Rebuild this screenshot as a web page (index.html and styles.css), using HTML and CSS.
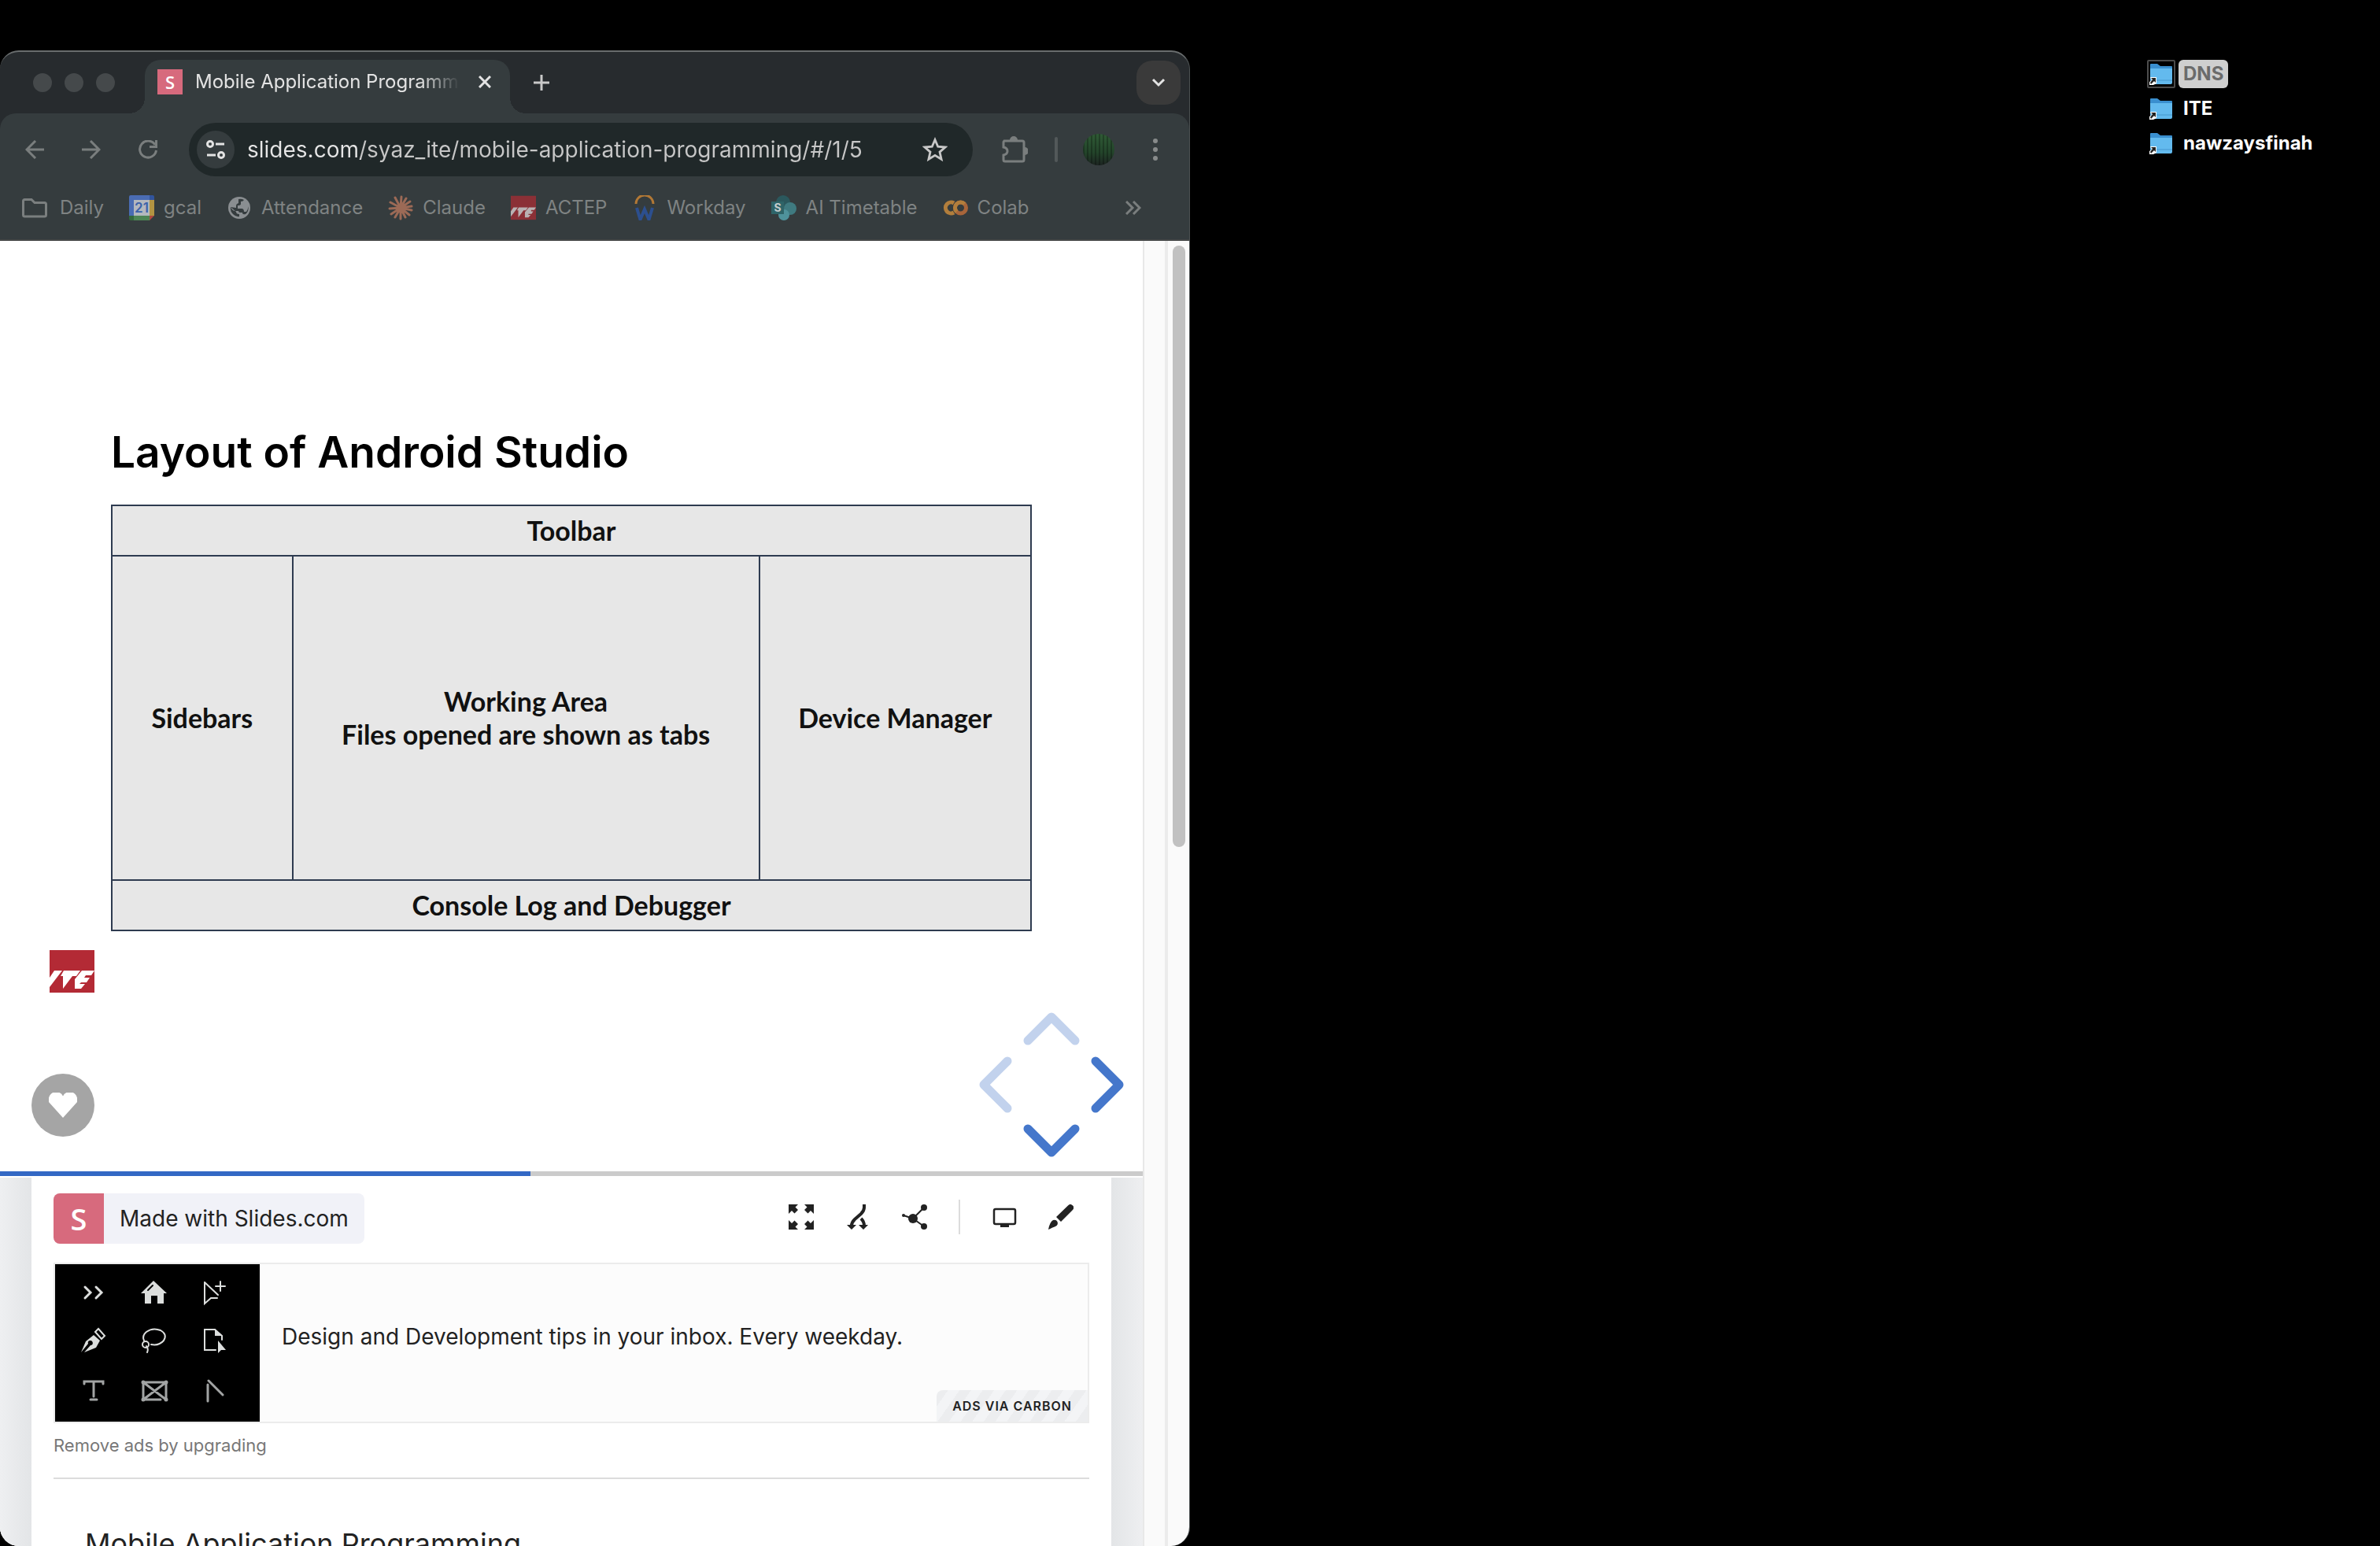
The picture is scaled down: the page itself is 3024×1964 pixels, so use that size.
FILE: index.html
```html
<!DOCTYPE html>
<html lang="en">
<head>
<meta charset="utf-8">
<title>Mobile Application Programming</title>
<link rel="stylesheet" href="styles.css">
</head>
<body>
<div class="desktop">
  <main class="window">
    <header class="tab-strip">
      <div class="lights"><span class="light"></span><span class="light"></span><span class="light"></span></div>
      <div class="tab">
        <span class="favicon">S</span>
        <span class="tab-title">Mobile Application Programming</span>
        <button class="tab-close" aria-label="Close tab">
          <svg width="16" height="16" viewBox="0 0 16 16"><path d="M1 1 15 15M15 1 1 15" stroke="#e3e3e3" stroke-width="3"/></svg>
        </button>
      </div>
      <button class="new-tab" aria-label="New tab">
        <svg width="20" height="20" viewBox="0 0 20 20"><path d="M10 0V20M0 10H20" stroke="#c9c9c9" stroke-width="3"/></svg>
      </button>
      <button class="tab-search" aria-label="Search tabs">
        <svg width="18" height="12" viewBox="0 0 18 12"><path d="M2 2 9 9 16 2" fill="none" stroke="#e3e3e3" stroke-width="3"/></svg>
      </button>
    </header>

    <nav class="toolbar" aria-label="Browser">
      <button class="tool" aria-label="Back">
        <svg width="24" height="24" viewBox="0 0 24 24" fill="none" stroke="#7a7e7e" stroke-width="3"><path d="M24 12H3M13 1 2 12 13 23"/></svg>
      </button>
      <button class="tool" aria-label="Forward">
        <svg width="24" height="24" viewBox="0 0 24 24" fill="none" stroke="#7a7e7e" stroke-width="3"><path d="M0 12H21M11 1 22 12 11 23"/></svg>
      </button>
      <button class="tool" aria-label="Reload">
        <svg width="24" height="24" viewBox="0 0 24 24" fill="none" stroke="#7a7e7e" stroke-width="3"><path d="M21 6A10.500 10.500 0 1 0 22.500 13M22.500 0V8.500H14"/></svg>
      </button>
      <div class="address">
        <button class="site-info" aria-label="Site information">
          <svg width="24" height="24" viewBox="0 0 24 24" fill="none" stroke="#e3e3e3" stroke-width="3"><circle cx="5" cy="5" r="3.500"/><path d="M12 5H23M1 19H12"/><circle cx="19" cy="19" r="3.500"/></svg>
        </button>
        <input class="url" type="text" aria-label="Address" value="slides.com/syaz_ite/mobile-application-programming/#/1/5">
        <button class="star" aria-label="Bookmark this page">
          <svg width="32" height="32" viewBox="0 0 32 32"><path d="M16 3.500 19.700 12.200 29 13 22 19.100 24.100 28.300 16 23.400 7.900 28.300 10 19.100 3 13 12.300 12.200Z" fill="none" stroke="#c7c7c7" stroke-width="2.800"/></svg>
        </button>
      </div>
      <button class="tool extensions" aria-label="Extensions">
        <svg width="34" height="34" viewBox="0 0 34 34"><path d="M3 6H27Q29 6 29 8V30Q29 32 27 32H5Q3 32 3 30V24Q8 23 8 19T3 14V8Q3 6 5 6" fill="none" stroke="#7a7e7e" stroke-width="3"/><path d="M11 5a5 5 0 0 1 10 0ZM30 14a5 5 0 0 1 0 10Z" fill="#7a7e7e"/></svg>
      </button>
      <span class="divider"></span>
      <button class="avatar" aria-label="Profile"></button>
      <button class="tool menu" aria-label="Menu">
        <svg width="6" height="28" viewBox="0 0 6 28" fill="#888b8b"><circle cx="3" cy="3" r="3"/><circle cx="3" cy="14" r="3"/><circle cx="3" cy="25" r="3"/></svg>
      </button>
    </nav>

    <nav class="bookmarks" aria-label="Bookmarks">
      <a class="bookmark folder-link" href="#"><svg width="32" height="32" viewBox="0 0 32 32"><path d="M3.500 5.500H12L16 9.500H28.500Q30.500 9.500 30.500 11.500V25Q30.500 27 28.500 27H3.500Q1.500 27 1.500 25V7.500Q1.500 5.500 3.500 5.500Z" fill="none" stroke="#7b7f7f" stroke-width="3"/></svg>Daily</a>
      <a class="bookmark" href="#"><svg width="32" height="32" viewBox="0 0 32 32"><path d="M2 0H26V6H6V26H0V2Q0 0 2 0Z" fill="#4a6cb3"/><path d="M26 0H30Q32 0 32 2V6H26Z" fill="#31549c"/><path d="M26 6H32V26H26Z" fill="#b39442"/><path d="M6 26H26V32H6Z" fill="#4d8554"/><path d="M0 26H6V32H2Q0 32 0 30Z" fill="#34693d"/><path d="M26 26H32L26 32Z" fill="#b0493e"/><path d="M6 6H26V26H6Z" fill="#b3b8be"/><text x="16" y="22" font-family="Inter, sans-serif" font-size="17" font-weight="600" text-anchor="middle" fill="#3b62ab">21</text></svg>gcal</a>
      <a class="bookmark" href="#"><svg width="32" height="32" viewBox="0 0 32 32"><circle cx="16" cy="16" r="14" fill="#8a8e91"/><path d="M15 5Q19 4 22 6Q21 8 18 8V11Q18 13 14 13V17H19Q22 17 22 21H25Q28 17 27 13Q29 20 24 24Q21 25 20 23V22H17Q15 22 15 20H11Q7 20 5 15Q4 20 8 24Q12 28 16 27V24Q12 24 12 21L5 15L12 16V13Q12 11 15 10Z" fill="#353c3e"/></svg>Attendance</a>
      <a class="bookmark" href="#"><svg width="32" height="32" viewBox="0 0 32 32" stroke="#9c6a56" stroke-width="3" stroke-linecap="round"><path d="M16 16 17 2M16 16 23 4M16 16 28 8M16 16 30 14M16 16 30 19M16 16 27 25M16 16 22 28M16 16 16 30M16 16 9 28M16 16 4 24M16 16 2 17M16 16 3 9M16 16 9 3"/></svg>Claude</a>
      <a class="bookmark" href="#"><svg width="32" height="32" viewBox="0 0 57 54"><path d="M0 0H57V54H0Z" fill="#8b3036"/><path d="M0 35 6 26H16L0 47ZM18 26H39L34 33H29L17 49V33H14ZM41 26H57L53 32H46V35H51L47 41H40V43H45L40 49H32V37Z" fill="#b9b2b3"/></svg>ACTEP</a>
      <a class="bookmark" href="#"><svg width="32" height="32" viewBox="0 0 32 32"><path d="M5 11A11 11 0 0 1 27 11" fill="none" stroke="#b27835" stroke-width="3"/><path d="M6 16 10.500 31 16 18 21.500 31 26 16" fill="none" stroke="#2c4f8f" stroke-width="4"/></svg>Workday</a>
      <a class="bookmark" href="#"><svg width="32" height="32" viewBox="0 0 32 32"><circle cx="15" cy="9" r="9" fill="#2b585d"/><circle cx="24" cy="17" r="8" fill="#3f7a80"/><circle cx="16" cy="25" r="7" fill="#4f929b"/><path d="M0 8H16V24H0Z" fill="#2e6468"/><text x="8" y="21" font-family="Inter, sans-serif" font-size="14" font-weight="700" text-anchor="middle" fill="#c4cccd">S</text></svg>AI Timetable</a>
      <a class="bookmark" href="#"><svg width="32" height="32" viewBox="0 0 32 32" fill="none" stroke-width="5"><path d="M14 10A7 7 0 1 0 14 22" stroke="#b27e3c"/><circle cx="22.500" cy="16" r="7" stroke="#a8653a"/><path d="M17.500 21A7 7 0 0 1 27.500 11" stroke="#b27e3c"/></svg>Colab</a>
      <button class="tool more" aria-label="More bookmarks">
        <svg width="20" height="18" viewBox="0 0 20 18" fill="none" stroke="#7a7e7e" stroke-width="3"><path d="M1 1 9 9 1 17M10 1 18 9 10 17"/></svg>
      </button>
    </nav>

    <div class="viewport">
      <div class="page">
        <section class="slide">
          <h1 class="slide-title">Layout of Android Studio</h1>
          <div class="diagram">
            <div class="cell wide">Toolbar</div>
            <div class="cell">Sidebars</div>
            <div class="cell">Working Area<br>Files opened are shown as tabs</div>
            <div class="cell">Device Manager</div>
            <div class="cell wide">Console Log and Debugger</div>
          </div>
          <svg class="ite" width="57" height="54" viewBox="0 0 57 54" role="img" aria-label="ITE"><path d="M0 0H57V54H0Z" fill="#b32a35"/><path d="M0 35 6 26H16L0 47ZM18 26H39L34 33H29L17 49V33H14ZM41 26H57L53 32H46L44 35H51L47 41H40L38 43H45L40 49H32V37Z" fill="#fff"/></svg>
          <button class="like" aria-label="Like">
            <svg width="36" height="32" viewBox="0 0 36 32"><path d="M18 32 0 12V10A9.500 9.500 0 0 1 18 4.500A9.500 9.500 0 0 1 36 10V12Z" fill="#fff"/></svg>
          </button>
          <div class="controls">
            <button class="arrow up" aria-label="Up" disabled><svg width="72" height="42" viewBox="0 0 72 42"><path d="M6 36 36 6 66 36"/></svg></button>
            <button class="arrow left" aria-label="Left" disabled><svg width="42" height="72" viewBox="0 0 42 72"><path d="M36 6 6 36 36 66"/></svg></button>
            <button class="arrow right" aria-label="Right"><svg width="42" height="72" viewBox="0 0 42 72"><path d="M6 6 36 36 6 66"/></svg></button>
            <button class="arrow down" aria-label="Down"><svg width="72" height="42" viewBox="0 0 72 42"><path d="M6 6 36 36 66 6"/></svg></button>
          </div>
        </section>
        <div class="progress"><div class="progress-bar"></div></div>
        <div class="below">
          <article class="panel">
            <div class="panel-head">
              <a class="made-with" href="#"><span class="made-logo">S</span><span class="made-text">Made with Slides.com</span></a>
              <div class="actions">
                <button class="action" aria-label="Fullscreen"><svg width="32" height="32" viewBox="0 0 32 32" fill="#222"><path d="M0 0H12L8.500 3.500 12 7 7.500 11.500 4 8 0 12Z"/><path d="M32 0V12L28 8 24.500 11.500 20 7 23.500 3.500 20 0ZM0 32V20L4 24 7.500 20.500 12 25 8.500 28.500 12 32ZM32 32H20L23.500 28.500 20 25 24.500 20.500 28 24 32 20Z"/></svg></button>
                <button class="action" aria-label="Fork"><svg width="32" height="32" viewBox="0 0 32 32"><path d="M24 0V4Q24 8 20 12L12 19Q8 23 8 27M20 18Q24 22 24 27" fill="none" stroke="#222" stroke-width="4"/><path d="M2 26H14L8 32ZM17 26H29L23 32Z" fill="#222"/></svg></button>
                <button class="action" aria-label="Share"><svg width="32" height="32" viewBox="0 0 32 32" fill="#222"><path d="M2 14 14 18 28 4M14 18 28 28" fill="none" stroke="#222" stroke-width="2"/><circle cx="14" cy="18" r="6"/><circle cx="28" cy="4" r="4"/><circle cx="28" cy="28" r="4"/><circle cx="2" cy="14" r="2"/></svg></button>
                <span class="action-divider"></span>
                <button class="action" aria-label="Present"><svg width="32" height="32" viewBox="0 0 32 32"><rect x="3" y="6" width="27" height="19" rx="2" fill="none" stroke="#222" stroke-width="2.500"/><path d="M11 25H22V29H11Z" fill="#222"/></svg></button>
                <button class="action" aria-label="Theme"><svg width="32" height="32" viewBox="0 0 32 32" fill="#222"><path d="M25 1.500A4 4 0 0 1 31 7L16 22 10 16Z"/><path d="M0 32Q2 22 6 20Q10 19 11.500 22Q13 26 9 28Q6 29 0 32Z"/></svg></button>
              </div>
            </div>
            <a class="ad" href="#">
              <svg class="ad-art" width="260" height="200" viewBox="0 0 260 200" fill="none" stroke="#dcdedd" stroke-width="3" stroke-linecap="round">
                <path d="M0 0H260V200H0Z" fill="#000" stroke="none"/>
                <path d="M38 29 45 36 38 43M52 29 59 36 52 43"/>
                <path d="M125 21 142 37H138V50H130V40H122V50H114V37H109Z" fill="#dcdedd" stroke="none"/><path d="M118 33 124 27" stroke="#000" stroke-width="2"/>
                <path d="M190 23V50L198 43H206M190 23 207 39M210 22V34M204 28H216" stroke-width="2"/>
                <path d="M33 112 39 98 49 90 57 97 52 106 37 112 45 103A3 3 0 1 0 42 101Z" fill="#dcdedd" stroke="none"/><path d="M55 82 63 91 59 95 51 86Z" stroke-width="2"/>
                <path d="M113 97Q110 91 116 86Q124 80 134 84Q143 89 138 97Q132 104 122 102" stroke-width="2"/><circle cx="115" cy="102" r="4" stroke-width="2"/><path d="M116 104Q119 108 117 112" stroke-width="2"/>
                <path d="M204 109H190V83H203L212 91V96" stroke-width="2"/><path d="M203 82V91H212ZM207 97V113L211 109H217Z" fill="#dcdedd" stroke="none"/>
                <g stroke="#a2a4a4" stroke-width="3"><path d="M37 152V149H61V152M49 149V168M45 172H53M112 150H141M112 172H134M112 150V172M141 150V172M112 150 141 172M141 150 112 172M195 148 213 166M194 153V174"/><circle cx="112" cy="150" r="1"/><circle cx="141" cy="150" r="1"/><circle cx="112" cy="172" r="1"/><circle cx="141" cy="172" r="1"/></g>
              </svg>
              <span class="ad-text">Design and Development tips in your inbox. Every weekday.</span>
              <span class="ad-tag">ADS VIA CARBON</span>
            </a>
            <a class="remove-ads" href="#">Remove ads by upgrading</a>
            <h2 class="deck-title">Mobile Application Programming</h2>
          </article>
        </div>
      </div>
      <div class="gutter"></div>
      <div class="scroll-track"><div class="scroll-thumb"></div></div>
    </div>
  </main>

  <aside class="files">
    <a class="file selected" href="#"><svg class="folder" width="36" height="36" viewBox="0 0 36 36"><path d="M4 6Q4 5 5 5H13L17 8H31Q32 8 32 9V12H4Z" fill="#3a8fcf"/><path d="M4 11H32V29Q32 31 30 31H6Q4 31 4 29Z" fill="#63baee"/><path d="M4 25H32V27H4Z" fill="#54a9de"/><path d="M4 22H12V30L8 32H3V28L6 26Z" fill="#fff"/><path d="M5 23H11V29L9 27 5 31 4 29 7 25Z" fill="#222"/></svg><span class="file-name">DNS</span></a>
    <a class="file" href="#"><svg class="folder" width="36" height="36" viewBox="0 0 36 36"><path d="M4 6Q4 5 5 5H13L17 8H31Q32 8 32 9V12H4Z" fill="#3a8fcf"/><path d="M4 11H32V29Q32 31 30 31H6Q4 31 4 29Z" fill="#63baee"/><path d="M4 25H32V27H4Z" fill="#54a9de"/><path d="M4 22H12V30L8 32H3V28L6 26Z" fill="#fff"/><path d="M5 23H11V29L9 27 5 31 4 29 7 25Z" fill="#222"/></svg><span class="file-name">ITE</span></a>
    <a class="file" href="#"><svg class="folder" width="36" height="36" viewBox="0 0 36 36"><path d="M4 6Q4 5 5 5H13L17 8H31Q32 8 32 9V12H4Z" fill="#3a8fcf"/><path d="M4 11H32V29Q32 31 30 31H6Q4 31 4 29Z" fill="#63baee"/><path d="M4 25H32V27H4Z" fill="#54a9de"/><path d="M4 22H12V30L8 32H3V28L6 26Z" fill="#fff"/><path d="M5 23H11V29L9 27 5 31 4 29 7 25Z" fill="#222"/></svg><span class="file-name">nawzaysfinah</span></a>
  </aside>
</div>
</body>
</html>
```
FILE: styles.css
```css
* {
  box-sizing: border-box;
}

body {
  margin: 0;
  background: #000;
  font-family: Inter, "Liberation Sans", sans-serif;
}

button {
  border: 0;
  padding: 0;
  background: none;
  font: inherit;
  display: flex;
  align-items: center;
  justify-content: center;
}

a {
  color: inherit;
  text-decoration: none;
}

svg {
  display: block;
  flex: none;
}

.desktop {
  display: flex;
  justify-content: space-between;
  align-items: flex-start;
  height: 100vh;
  padding-top: 64px;
  overflow: hidden;
}

/* Browser window */
.window {
  display: flex;
  flex-direction: column;
  width: 50%;
  height: 100%;
  border-top: 2px solid #696d6e;
  border-right: 1px solid #4c5152;
  border-radius: 24px;
  overflow: hidden;
  background: #272b2e;
}

.tab-strip {
  display: flex;
  align-items: center;
  flex: none;
  height: 78px;
  padding: 0 11px 0 42px;
}

.lights {
  display: flex;
  gap: 16px;
}

.light {
  width: 24px;
  height: 24px;
  border-radius: 50%;
  background: #45494b;
}

.tab {
  position: relative;
  display: flex;
  align-items: center;
  align-self: flex-end;
  width: 464px;
  height: 68px;
  margin-left: 38px;
  padding: 0 24px 12px 16px;
  border-radius: 20px 20px 0 0;
  background: #353c3e;
}

.tab::before,
.tab::after {
  content: "";
  position: absolute;
  bottom: 0;
  width: 20px;
  height: 20px;
}

.tab::before {
  right: 100%;
  background: radial-gradient(circle at 0 0, #272b2e 20px, #353c3e 20px);
}

.tab::after {
  left: 100%;
  background: radial-gradient(circle at 100% 0, #272b2e 20px, #353c3e 20px);
}

.favicon {
  flex: none;
  width: 32px;
  background: #d76a7d;
  color: #fff;
  font: 600 22px/32px "Open Sans", sans-serif;
  text-align: center;
}

.tab-title {
  flex: 1;
  margin: 0 24px 0 16px;
  overflow: hidden;
  white-space: nowrap;
  color: #e3e3e3;
  font-size: 24px;
  line-height: 32px;
  -webkit-mask-image: linear-gradient(90deg, #000 calc(100% - 50px), transparent);
  mask-image: linear-gradient(90deg, #000 calc(100% - 50px), transparent);
}

.new-tab {
  margin-left: 30px;
}

.tab-search {
  width: 56px;
  height: 56px;
  margin-left: auto;
  border-radius: 20px;
  background: #3a3a3a;
}

/* Toolbar */
.toolbar {
  display: flex;
  align-items: center;
  flex: none;
  height: 92px;
  padding: 0 40px 0 32px;
  border-radius: 20px 20px 0 0;
  background: #353c3e;
}

.tool {
  flex: none;
  margin-right: 48px;
}

.address {
  display: flex;
  align-items: center;
  flex: 1;
  height: 68px;
  margin-left: -8px;
  padding: 0 32px 0 10px;
  border-radius: 34px;
  background: #202829;
}

.site-info {
  flex: none;
  width: 48px;
  height: 48px;
  border-radius: 50%;
  background: #353c3e;
}

.url {
  flex: 1;
  min-width: 0;
  height: 40px;
  padding: 0;
  margin: 0 16px;
  border: 0;
  outline: 0;
  background: linear-gradient(90deg, #e6e6e6 144px, #c7c7c7 144px);
  -webkit-background-clip: text;
  background-clip: text;
  color: transparent;
  font: 28px/40px Inter, sans-serif;
}

.extensions {
  margin: 0 34px 0 36px;
}

.divider {
  width: 4px;
  height: 32px;
  border-radius: 2px;
  background: #525859;
}

.avatar {
  width: 40px;
  height: 40px;
  margin: 0 49px 0 32px;
  border-radius: 50%;
  background:
    repeating-linear-gradient(90deg, rgba(0, 0, 0, 0.250) 0 2px, transparent 2px 5px),
    linear-gradient(#2f5a35, #23442a 60%, #1c2421);
}

.menu {
  margin: 0;
}

.bookmarks {
  display: flex;
  align-items: center;
  flex: none;
  gap: 32px;
  height: 70px;
  padding: 0 61px 12px 28px;
  border-bottom: 2px solid #454747;
  background: #353c3e;
  color: #7f8383;
  font-size: 24px;
  line-height: 32px;
}

.bookmark {
  display: flex;
  align-items: center;
  gap: 12px;
  white-space: nowrap;
}

.folder-link {
  gap: 16px;
}

.more {
  margin: 0 0 0 auto;
}

/* Page area */
.viewport {
  display: flex;
  flex: 1;
  min-height: 0;
  background: #fafafa;
}

.page {
  flex: 1;
  min-width: 0;
  overflow: hidden;
  background: #fff;
}

.gutter {
  width: 28px;
  border-left: 2px solid #e8e8e8;
}

.scroll-track {
  width: 31px;
  padding: 6px 5px 0 6px;
  border-left: 4px solid #ebebeb;
}

.scroll-thumb {
  height: 764px;
  border-radius: 8px;
  background: #c1c1c1;
}

.slide {
  position: relative;
  min-height: 1182px;
  padding: 228px 141px 0 141px;
}

.slide-title {
  margin: 0 0 27px;
  color: #000;
  font-size: 55px;
  font-weight: 600;
  line-height: 80px;
}

.diagram {
  display: grid;
  grid-template-columns: 230fr 594fr 346fr;
  grid-template-rows: 64px 412px 64px;
  border: 1px solid #2e3b50;
  background: #e7e7e7;
}

.cell {
  display: flex;
  align-items: center;
  justify-content: center;
  border: 1px solid #2e3b50;
  color: #111;
  font: 700 34px/42px Lato, sans-serif;
  text-align: center;
}

.wide {
  grid-column: 1 / -1;
}

.ite {
  position: absolute;
  left: 63px;
  bottom: 227px;
}

.like {
  position: absolute;
  left: 40px;
  bottom: 44px;
  width: 80px;
  height: 80px;
  border-radius: 50%;
  background: #a5a5a5;
}

.controls {
  position: absolute;
  right: 24px;
  bottom: 18px;
  display: grid;
  grid-template-columns: 56px 72px 56px;
  grid-template-rows: 56px 72px 56px;
}

.arrow {
  fill: none;
  stroke: #4577cb;
  stroke-width: 11;
  stroke-linecap: round;
  stroke-linejoin: round;
}

.arrow:disabled {
  stroke: #c2d2ed;
}

.up {
  grid-area: 1 / 2;
  align-items: flex-start;
}

.left {
  grid-area: 2 / 1;
  justify-content: flex-start;
}

.right {
  grid-area: 2 / 3;
  justify-content: flex-end;
}

.down {
  grid-area: 3 / 2;
  align-items: flex-end;
}

.progress {
  height: 6px;
  margin-bottom: 2px;
  background: #cbcbcb;
}

.progress-bar {
  width: 46.400%;
  height: 100%;
  background: #3368c4;
}

.below {
  padding: 0 40px;
  background: linear-gradient(90deg, #eeeff1, #e3e5e7 40px, #e3e5e7 calc(100% - 40px), #eeeff1);
}

.panel {
  padding: 20px 28px;
  background: #fff;
  color: #222;
}

.panel-head {
  display: flex;
  align-items: center;
  justify-content: space-between;
  margin-bottom: 24px;
}

.made-with {
  display: flex;
  border-radius: 8px;
  overflow: hidden;
  background: #f1f2f8;
  font-size: 28px;
  line-height: 64px;
}

.made-logo {
  width: 64px;
  background: #d76a7d;
  color: #fff;
  font-family: "Open Sans", sans-serif;
  font-size: 38px;
  font-weight: 600;
  text-align: center;
}

.made-text {
  padding: 0 20px;
}

.actions {
  display: flex;
  align-items: center;
  gap: 40px;
  padding: 0 20px 4px 0;
}

.action-divider {
  width: 2px;
  height: 44px;
  background: #dcdcdc;
}

.ad {
  position: relative;
  display: flex;
  align-items: center;
  border: 2px solid #ececec;
  background: #fcfcfc;
  font-size: 28px;
  line-height: 40px;
}

.ad-text {
  padding: 0 28px 16px;
}

.ad-tag {
  position: absolute;
  right: 0;
  bottom: 0;
  padding: 0 20px;
  border-radius: 8px 0 0;
  background: repeating-linear-gradient(125deg, #ecedef 0 12px, #f3f4f6 12px 24px);
  font-size: 16px;
  font-weight: 600;
  letter-spacing: 1px;
  line-height: 40px;
}

.remove-ads {
  display: block;
  padding: 12px 0 25px;
  border-bottom: 2px solid #dcdcdc;
  color: #777;
  font-size: 22px;
  line-height: 32px;
}

.deck-title {
  margin: 58px 40px 0;
  font-size: 36px;
  font-weight: 400;
  line-height: 48px;
}

/* Desktop icons */
.files {
  display: flex;
  flex-direction: column;
  gap: 8px;
  min-width: 296px;
  padding-top: 12px;
}

.file {
  display: flex;
  gap: 4px;
  color: #fff;
  font-size: 24px;
  font-weight: 700;
  line-height: 36px;
}

.file-name {
  align-self: flex-start;
  padding: 0 6px;
  border-radius: 6px;
}

.selected .folder {
  border-radius: 2px;
  outline: 2px solid #4c4c4c;
  outline-offset: -2px;
}

.selected .file-name {
  background: #cfcfcf;
  color: #6b6b6b;
}
```
